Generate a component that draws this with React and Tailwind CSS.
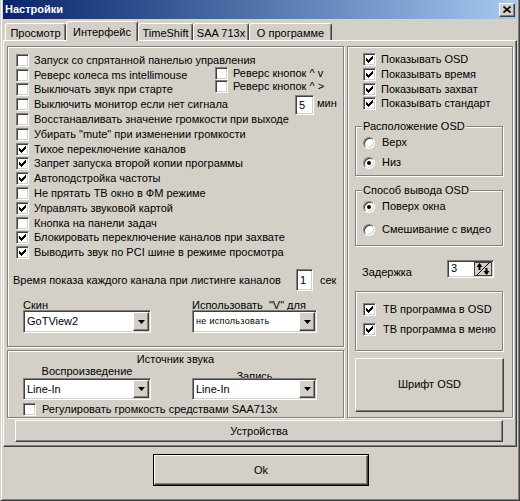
import React from "react";

const sunken =
  "border border-t-[#808080] border-l-[#808080] border-b-white border-r-white shadow-[inset_1px_1px_0_#404040,inset_-1px_-1px_0_#d4d0c8]";
const raised =
  "border border-t-white border-l-white border-r-[#404040] border-b-[#404040] shadow-[inset_-1px_-1px_0_#808080]";
const etched = "border border-[#808080] shadow-[inset_1px_1px_0_#fff,1px_1px_0_#fff]";

const checkPixels = [
  [2, 4],
  [3, 5],
  [4, 6],
  [5, 5],
  [6, 4],
  [7, 3],
  [8, 2],
];

function Check({ checked }) {
  return (
    <span className={`relative block w-[13px] h-[13px] shrink-0 bg-white ${sunken}`}>
      {checked && (
        <svg className="absolute left-0 top-0" width="11" height="11" viewBox="0 0 11 11" shapeRendering="crispEdges">
          {checkPixels.map(([x, y]) => (
            <rect key={x} x={x} y={y} width="1" height="3" fill="#000" />
          ))}
        </svg>
      )}
    </span>
  );
}

function Radio({ checked }) {
  return (
    <span className="flex items-center justify-center w-[12px] h-[12px] shrink-0 rounded-full bg-white border border-t-[#808080] border-l-[#808080] border-b-white border-r-white shadow-[inset_1px_1px_0_#404040,inset_-1px_-1px_0_#d4d0c8]">
      {checked && <span className="block w-[4px] h-[4px] rounded-full bg-black" />}
    </span>
  );
}

function Arrow() {
  return (
    <svg width="7" height="4" viewBox="0 0 7 4">
      <polygon points="0,0 7,0 3.5,4" fill="#000" />
    </svg>
  );
}

function Combo({ value, small }) {
  return (
    <div className={`flex w-full h-full bg-white p-px ${sunken}`}>
      <span className={`flex-1 flex items-center pl-[2px] whitespace-nowrap ${small ? "text-[9px] tracking-[0.3px]" : ""}`}>
        {value}
      </span>
      <span className={`w-[16px] h-full flex items-center justify-center bg-[#d4d0c8] ${raised}`}>
        <Arrow />
      </span>
    </div>
  );
}

function CheckRow({ label, checked }) {
  return (
    <div className="flex items-center h-[14.8px] gap-[5px] pl-[3px]">
      <Check checked={checked} />
      <span className="whitespace-nowrap">{label}</span>
    </div>
  );
}

const leftRows = [
  ["Восстанавливать значение громкости при выходе", false],
  ['Убирать "mute" при изменении громкости', false],
  ["Тихое переключение каналов", true],
  ["Запрет запуска второй копии программы", true],
  ["Автоподстройка частоты", true],
  ["Не прятать ТВ окно в ФМ режиме", false],
  ["Управлять звуковой картой", true],
  ["Кнопка на панели задач", false],
  ["Блокировать переключение каналов при захвате", true],
  ["Выводить звук по PCI шине в режиме просмотра", true],
];

const tabs = [
  ["Просмотр", 61],
  ["Интерфейс", 72],
  ["TimeShift", 55],
  ["SAA 713x", 56],
  ["О программе", 83],
];

export default function App() {
  return (
    <div
      className="w-[520px] h-[501px] bg-[#d4d0c8] text-black text-[11px] leading-[13px] border-l border-r border-b border-l-[#d4d0c8] border-r-[#404040] border-b-[#404040] shadow-[inset_1px_0_0_#fff,inset_-1px_-1px_0_#808080] px-[2px] pb-[2px] flex flex-col overflow-hidden"
      style={{ fontFamily: '"Liberation Sans", Arial, sans-serif' }}
    >
      {/* title bar */}
      <div className="h-[19px] shrink-0 flex items-center justify-between pl-[2px] pr-[2px] bg-gradient-to-r from-[#0a246a] to-[#a6caf0]">
        <span className="text-white font-bold text-[11px]">Настройки</span>
        <span className={`w-[16px] h-[14px] flex items-center justify-center bg-[#d4d0c8] ${raised}`}>
          <svg width="8" height="7" viewBox="0 0 8 7">
            <path d="M0.5 0.5 L7.5 6.5 M7.5 0.5 L0.5 6.5" stroke="#000" strokeWidth="1.7" />
          </svg>
        </span>
      </div>

      {/* tabs */}
      <div className="h-[21px] shrink-0 flex items-end pl-[2px]">
        {tabs.map(([name, w], i) =>
          i === 1 ? (
            <div
              key={name}
              style={{ width: w }}
              className="relative z-10 -mb-px h-[20px] bg-[#d4d0c8] flex items-center justify-center pt-px border-t border-l border-r border-t-white border-l-white border-r-[#404040] rounded-t-[3px] shadow-[inset_-1px_0_0_#808080]"
            >
              {name}
            </div>
          ) : (
            <div
              key={name}
              style={{ width: w }}
              className="h-[17px] flex items-center justify-center pt-[2px] border-t border-l border-r border-t-white border-l-white border-r-[#404040] rounded-t-[3px] shadow-[inset_-1px_0_0_#808080]"
            >
              {name}
            </div>
          )
        )}
      </div>

      {/* tab panel */}
      <div className={`h-[407px] shrink-0 pl-[3px] pt-[5px] flex flex-col ${raised}`}>
        <div className="flex gap-[3px]">
          <div className="w-[337px] flex flex-col gap-[3px]">
            {/* upper left frame */}
            <div className={`h-[301px] pt-[6px] pl-[5px] flex flex-col ${etched}`}>
              <div className="flex h-[59.2px]">
                <div className="w-[202px] flex flex-col">
                  <CheckRow label="Запуск со спрятанной панелью управления" />
                  <CheckRow label="Реверс колеса ms intellimouse" />
                  <CheckRow label="Выключать звук при старте" />
                  <CheckRow label="Выключить монитор если нет сигнала" />
                </div>
                <div className="flex flex-col pt-[14px]">
                  <div className="flex items-center h-[13px] gap-[5px]">
                    <Check />
                    <span className="whitespace-nowrap">Реверс кнопок ^ v</span>
                  </div>
                  <div className="flex items-center h-[13px] gap-[5px]">
                    <Check />
                    <span className="whitespace-nowrap">Реверс кнопок ^ &gt;</span>
                  </div>
                  <div className="flex items-center mt-[2px] ml-[80px]">
                    <span className={`w-[19px] h-[20px] bg-white flex items-center pl-[3px] ${sunken}`}>5</span>
                    <span className="ml-[3px] -mt-[3px]">мин</span>
                  </div>
                </div>
              </div>
              {leftRows.map(([label, checked]) => (
                <CheckRow key={label} label={label} checked={checked} />
              ))}

              <div className="flex items-center h-[22px] mt-[9px]">
                <span className="w-[283px] whitespace-nowrap">Время показа каждого канала при листинге каналов</span>
                <span className={`w-[17px] h-[22px] bg-white flex items-center pl-[3px] ${sunken}`}>1</span>
                <span className="ml-[7px]">сек</span>
              </div>

              <div className="flex mt-[8px] pl-[10px] gap-[41px]">
                <div className="w-[128px] flex flex-col">
                  <span className="h-[12px] leading-[12px]">Скин</span>
                  <div className="h-[23px] -mt-px">
                    <Combo value="GoTView2" />
                  </div>
                </div>
                <div className="w-[125px] flex flex-col">
                  <span className="h-[12px] leading-[12px] whitespace-nowrap">Использовать&nbsp; "V" для</span>
                  <div className="h-[23px] -mt-px">
                    <Combo value="не использовать" small />
                  </div>
                </div>
              </div>
            </div>

            {/* lower left frame */}
            <div className={`h-[68px] pt-[2px] flex flex-col ${etched}`}>
              <div className="h-[12px] leading-[12px] text-center">Источник звука</div>
              <div className="flex pl-[15px] gap-[41px]">
                <div className="w-[128px] flex flex-col">
                  <span className="h-[13px] leading-[13px] text-center">Воспроизведение</span>
                  <div className="h-[22px]">
                    <Combo value="Line-In" />
                  </div>
                </div>
                <div className="w-[125px] flex flex-col">
                  <span className="h-[13px] leading-[13px] mt-[5px] text-center">Запись</span>
                  <div className="h-[22px] -mt-[5px]">
                    <Combo value="Line-In" />
                  </div>
                </div>
              </div>
              <div className="flex items-center gap-[6px] pl-[15px] mt-[3px] h-[13px]">
                <Check />
                <span className="whitespace-nowrap">Регулировать громкость средствами SAA713x</span>
              </div>
            </div>
          </div>

          {/* right frame */}
          <div className={`w-[166px] h-[372px] pt-[5.5px] pl-[7px] flex flex-col ${etched}`}>
            {["Показывать OSD", "Показывать время", "Показывать захват", "Показывать стандарт"].map((t) => (
              <div key={t} className="flex items-center h-[14.7px] gap-[5px] pl-[8px]">
                <Check checked />
                <span className="whitespace-nowrap">{t}</span>
              </div>
            ))}

            <div className={`relative w-[148px] h-[50px] mt-[14.7px] pt-[6px] pl-[7px] flex flex-col ${etched}`}>
              <span className="absolute -top-[7px] left-[6px] px-px bg-[#d4d0c8] leading-[12px] whitespace-nowrap">
                Расположение OSD
              </span>
              <div className="flex items-center h-[20px] gap-[7px]">
                <Radio />
                <span>Верх</span>
              </div>
              <div className="flex items-center h-[20px] gap-[7px]">
                <Radio checked />
                <span>Низ</span>
              </div>
            </div>

            <div className={`relative w-[148px] h-[56px] mt-[14px] pt-[6px] pl-[7px] flex flex-col gap-[3px] ${etched}`}>
              <span className="absolute -top-[7px] left-[6px] px-px bg-[#d4d0c8] leading-[12px] whitespace-nowrap">
                Способ вывода OSD
              </span>
              <div className="flex items-center h-[20px] gap-[7px]">
                <Radio checked />
                <span>Поверх окна</span>
              </div>
              <div className="flex items-center h-[20px] gap-[7px]">
                <Radio />
                <span className="whitespace-nowrap">Смешивание с видео</span>
              </div>
            </div>

            <div className="flex items-start mt-[14px]">
              <span className="w-[92px] pl-[7px] mt-[6px] leading-[12px]">Задержка</span>
              <div className={`w-[47px] h-[18px] flex bg-white p-px ${sunken}`}>
                <span className="flex-1 flex items-center pl-[2px]">3</span>
                <span className={`w-[18px] h-full flex items-center justify-center bg-[#d4d0c8] border border-[#404040]`}>
                  <svg width="14" height="14" viewBox="0 0 14 14">
                    <path d="M0.5 13.5 L13.5 0.5" stroke="#000" strokeWidth="1" />
                    <path d="M3.5 2 L3.5 8" stroke="#000" strokeWidth="2" />
                    <polygon points="0.5,5 3.5,1 6.5,5" fill="#000" />
                    <path d="M10.5 6 L10.5 12" stroke="#000" strokeWidth="2" />
                    <polygon points="7.5,9 10.5,13 13.5,9" fill="#000" />
                  </svg>
                </span>
              </div>
            </div>

            <div className={`w-[148px] h-[60px] mt-[13px] pt-[8px] pl-[7px] flex flex-col ${etched}`}>
              <div className="flex items-center h-[20px] gap-[7px]">
                <Check checked />
                <span className="whitespace-nowrap">ТВ программа в OSD</span>
              </div>
              <div className="flex items-center h-[20px] gap-[7px]">
                <Check checked />
                <span className="whitespace-nowrap">ТВ программа в меню</span>
              </div>
            </div>

            <div className={`w-[149px] h-[54px] mt-[7px] flex items-center justify-center ${raised}`}>Шрифт OSD</div>
          </div>
        </div>

        <div className={`ml-[8px] mt-[2px] w-[488px] h-[22px] flex items-center justify-center ${raised}`}>Устройства</div>
      </div>

      {/* Ok */}
      <div className="ml-[150px] mt-[7px] w-[216px] h-[32px] border border-black">
        <div className={`h-full flex items-center justify-center ${raised}`}>Ok</div>
      </div>
    </div>
  );
}
